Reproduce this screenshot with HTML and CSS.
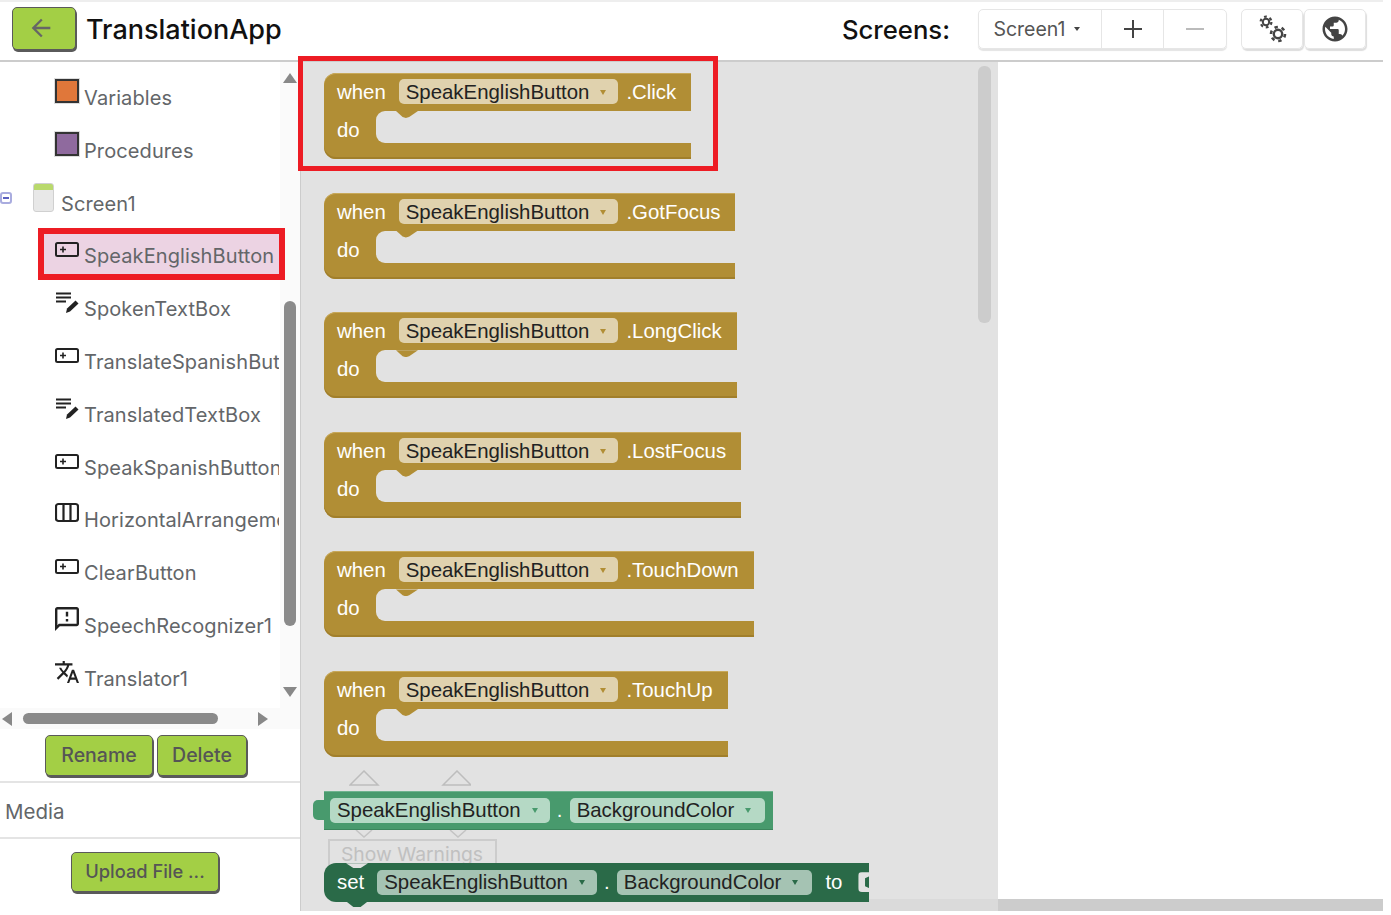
FILE: index.html
```html
<!DOCTYPE html>
<html lang="en">

<head>
    <meta charset="UTF-8">
    <title>TranslationApp</title>
    <link rel="stylesheet" href="styles.css">
</head>

<body>
    <div id="app">
        <header id="header">
            <button class="btn back-btn">
                <svg width="28" height="28" viewBox="0 0 24 24"><path d="M20 11H7.83l5.59-5.59L12 4l-8 8 8 8 1.41-1.41L7.83 13H20v-2z"/></svg>
            </button>
            <h1 class="app-title">TranslationApp</h1>
            <span class="screens-label">Screens:</span>
            <div class="tool-group">
                <div class="tool tool-screen">Screen1 <i class="caret"></i></div>
                <div class="tool tool-add">
                    <svg width="22" height="22" viewBox="0 0 22 22"><path d="M11 2v18M2 11h18" stroke="#444" stroke-width="2"/></svg>
                </div>
                <div class="tool tool-remove">
                    <svg width="22" height="22" viewBox="0 0 22 22"><path d="M2 11h18" stroke="#bbb" stroke-width="2"/></svg>
                </div>
            </div>
            <div class="tool-pair">
                <div class="tool tool-icon">
                    <svg width="30" height="30" viewBox="0 0 30 30" fill="none" stroke="#444">
                        <circle cx="9" cy="8" r="3.2" stroke-width="2"/>
                        <circle cx="9" cy="8" r="5.4" stroke-width="2.2" stroke-dasharray="2.8 2.9"/>
                        <circle cx="21" cy="20" r="4.2" stroke-width="2.4"/>
                        <circle cx="21" cy="20" r="7" stroke-width="2.6" stroke-dasharray="3.4 3.9"/>
                    </svg>
                </div>
                <div class="tool tool-icon">
                    <svg width="30" height="30" viewBox="0 0 24 24" fill="#444"><path d="M12 2C6.48 2 2 6.48 2 12s4.48 10 10 10 10-4.48 10-10S17.52 2 12 2zm-1 17.93c-3.95-.49-7-3.85-7-7.93 0-.62.08-1.21.21-1.79L9 15v1c0 1.1.9 2 2 2v1.93zm6.9-2.54c-.26-.81-1-1.39-1.9-1.39h-1v-3c0-.55-.45-1-1-1H8v-2h2c.55 0 1-.45 1-1V7h2c1.1 0 2-.9 2-2v-.41c2.93 1.19 5 4.06 5 7.41 0 2.08-.8 3.97-2.1 5.39z"/></svg>
                </div>
            </div>
        </header>

        <div id="main">
            <aside id="sidebar">
                <div class="tree-wrap">
                    <ul class="tree">
                        <li class="row">
                            <i class="swatch swatch-orange"></i>
                            <span class="label">Variables</span>
                        </li>
                        <li class="row">
                            <i class="swatch swatch-purple"></i>
                            <span class="label">Procedures</span>
                        </li>
                        <li class="row row-screen">
                            <i class="collapse"></i>
                            <i class="screen-icon"></i>
                            <span class="label">Screen1</span>
                        </li>
                        <li class="row selected">
                            <svg class="icon" viewBox="0 0 24 24"><use href="#i-button"/></svg>
                            <span class="label">SpeakEnglishButton</span>
                        </li>
                        <li class="row">
                            <svg class="icon" viewBox="0 0 24 24"><use href="#i-textbox"/></svg>
                            <span class="label">SpokenTextBox</span>
                        </li>
                        <li class="row">
                            <svg class="icon" viewBox="0 0 24 24"><use href="#i-button"/></svg>
                            <span class="label">TranslateSpanishButton</span>
                        </li>
                        <li class="row">
                            <svg class="icon" viewBox="0 0 24 24"><use href="#i-textbox"/></svg>
                            <span class="label">TranslatedTextBox</span>
                        </li>
                        <li class="row">
                            <svg class="icon" viewBox="0 0 24 24"><use href="#i-button"/></svg>
                            <span class="label">SpeakSpanishButton</span>
                        </li>
                        <li class="row">
                            <svg class="icon" viewBox="0 0 24 24"><use href="#i-horizontal"/></svg>
                            <span class="label">HorizontalArrangement1</span>
                        </li>
                        <li class="row">
                            <svg class="icon" viewBox="0 0 24 24"><use href="#i-button"/></svg>
                            <span class="label">ClearButton</span>
                        </li>
                        <li class="row">
                            <svg class="icon" viewBox="2 2 20 20"><path d="M20 2H4c-1.1 0-2 .9-2 2v18l4-4h14c1.1 0 2-.9 2-2V4c0-1.1-.9-2-2-2zm0 14H5.17L4 17.17V4h16v12zM11 12h2v2h-2zm0-6h2v4h-2z"/></svg>
                            <span class="label">SpeechRecognizer1</span>
                        </li>
                        <li class="row">
                            <svg class="icon" viewBox="1 2 22 20"><path d="M12.87 15.07l-2.54-2.51.03-.03c1.74-1.94 2.98-4.17 3.71-6.53H17V4h-7V2H8v2H1v1.99h11.17C11.5 7.92 10.44 9.75 9 11.35 8.07 10.32 7.3 9.19 6.69 8h-2c.73 1.63 1.73 3.17 2.98 4.56l-5.09 5.02L4 19l5-5 3.11 3.11.76-2.04zM18.5 10h-2L12 22h2l1.12-3h4.75L21 22h2l-4.5-12zm-2.62 7l1.62-4.33L19.12 17h-3.24z"/></svg>
                            <span class="label">Translator1</span>
                        </li>
                    </ul>
                    <div class="vscroll">
                        <i class="arrow-up"></i>
                        <div class="vscroll-thumb"></div>
                        <i class="arrow-down"></i>
                    </div>
                </div>
                <div class="hscroll">
                    <i class="arrow-left"></i>
                    <div class="hscroll-thumb"></div>
                    <i class="arrow-right"></i>
                </div>
                <div class="actions">
                    <button class="btn btn-rename">Rename</button>
                    <button class="btn btn-delete">Delete</button>
                </div>
                <div class="media-title">Media</div>
                <div class="upload">
                    <button class="btn btn-upload">Upload File ...</button>
                </div>
            </aside>

            <section id="workspace">
                <div class="canvas">
                    <div class="canvas-scroll"></div>

                    <div class="event">
                        <div class="event-head">when <span class="field">SpeakEnglishButton <i class="field-caret"></i></span> <span class="event-name">.Click</span></div>
                        <div class="event-do"><span class="do-label">do</span><div class="slot"><i class="notch"></i></div></div>
                        <div class="event-foot"></div>
                    </div>
                    <div class="event">
                        <div class="event-head">when <span class="field">SpeakEnglishButton <i class="field-caret"></i></span> <span class="event-name">.GotFocus</span></div>
                        <div class="event-do"><span class="do-label">do</span><div class="slot"><i class="notch"></i></div></div>
                        <div class="event-foot"></div>
                    </div>
                    <div class="event">
                        <div class="event-head">when <span class="field">SpeakEnglishButton <i class="field-caret"></i></span> <span class="event-name">.LongClick</span></div>
                        <div class="event-do"><span class="do-label">do</span><div class="slot"><i class="notch"></i></div></div>
                        <div class="event-foot"></div>
                    </div>
                    <div class="event">
                        <div class="event-head">when <span class="field">SpeakEnglishButton <i class="field-caret"></i></span> <span class="event-name">.LostFocus</span></div>
                        <div class="event-do"><span class="do-label">do</span><div class="slot"><i class="notch"></i></div></div>
                        <div class="event-foot"></div>
                    </div>
                    <div class="event">
                        <div class="event-head">when <span class="field">SpeakEnglishButton <i class="field-caret"></i></span> <span class="event-name">.TouchDown</span></div>
                        <div class="event-do"><span class="do-label">do</span><div class="slot"><i class="notch"></i></div></div>
                        <div class="event-foot"></div>
                    </div>
                    <div class="event">
                        <div class="event-head">when <span class="field">SpeakEnglishButton <i class="field-caret"></i></span> <span class="event-name">.TouchUp</span></div>
                        <div class="event-do"><span class="do-label">do</span><div class="slot"><i class="notch"></i></div></div>
                        <div class="event-foot"></div>
                    </div>

                    <div class="getter">
                        <svg class="mutator mutator-up" width="122" height="16" viewBox="0 0 122 16" fill="none" stroke="#bdbdbd" stroke-width="1.5"><path d="M1 15L15 1l14 14zM94 15l14-14 14 14z"/></svg>
                        <span class="field field-getter">SpeakEnglishButton <i class="field-caret"></i></span>
                        <span class="dot">.</span>
                        <span class="field field-getter">BackgroundColor <i class="field-caret"></i></span>
                        <svg class="mutator mutator-down" width="112" height="8" viewBox="0 0 112 8" fill="none" stroke="#c4c4c4" stroke-width="1.5"><path d="M1 0l8 7 8-7M95 0l8 7 8-7"/></svg>
                    </div>

                    <div class="show-warnings">Show Warnings</div>

                    <div class="setter">
                        <span>set</span>
                        <span class="field field-setter">SpeakEnglishButton <i class="field-caret"></i></span>
                        <span class="dot">.</span>
                        <span class="field field-setter">BackgroundColor <i class="field-caret"></i></span>
                        <span class="setter-to">to</span>
                        <i class="socket"></i>
                    </div>

                    <div class="red-box"></div>
                </div>
                <div class="blank"></div>
                <div class="bottom-scroll">
                    <div class="bottom-a"></div>
                    <div class="bottom-b"></div>
                    <div class="bottom-c"></div>
                </div>
            </section>
        </div>
    </div>

    <svg class="defs" width="0" height="0">
        <symbol id="i-button" viewBox="0 0 24 24">
            <rect x="1" y="6" width="22" height="13" rx="1.5" fill="none" stroke="#222" stroke-width="2"/>
            <path d="M5 12.5h6M8 9.5v6" stroke="#222" stroke-width="1.6"/>
        </symbol>
        <symbol id="i-textbox" viewBox="0 0 24 24">
            <path d="M1 3.5h15M1 7.5h15M1 11.5h10" stroke="#222" stroke-width="2"/>
            <path d="M11 23l1-4.500 8.500-8 3 3-8.500 8z" fill="#222"/>
        </symbol>
        <symbol id="i-horizontal" viewBox="0 0 24 24">
            <rect x="1" y="3" width="22" height="17" rx="2.5" fill="none" stroke="#222" stroke-width="2.2"/>
            <path d="M8.500 3v17M15.500 3v17" stroke="#222" stroke-width="2.2"/>
        </symbol>
    </svg>
</body>

</html>
```

FILE: styles.css
```css
*,
*::before,
*::after {
    padding: 0;
    margin: 0;
    box-sizing: border-box;
}

li {
    list-style: none;
}

i {
    display: block;
    font-style: normal;
}

body {
    background: #fff;
    height: 915px;
    overflow: hidden;
    font-family: Inter, "Liberation Sans", sans-serif;
}

#app {
    width: 1383px;
}

.defs {
    position: absolute;
}

.btn {
    background: #a3cf45;
    border: 1px solid #5a5a5a;
    border-radius: 5px;
    box-shadow: 1px 2px 0 #5a5a5a;
    color: #555;
    font-family: Inter, "Liberation Sans", sans-serif;
    font-size: 19.500px;
    font-weight: 500;
    padding-bottom: 2px;
}

/* header */
#header {
    height: 62px;
    display: flex;
    align-items: center;
    padding: 0 0 1px 12px;
    border-top: 2px solid #eee;
    border-bottom: 2px solid #ccc;
}

.back-btn {
    width: 64px;
    height: 43px;
    display: flex;
    align-items: center;
    justify-content: center;
    margin-bottom: 4px;
}

.back-btn svg {
    fill: #666;
    margin-right: 6px;
}

.app-title {
    margin-left: 10px;
    margin-bottom: 3px;
    font-size: 27px;
    font-weight: 500;
    color: #111;
}

.screens-label {
    margin-left: auto;
    margin-bottom: 3px;
    font-size: 25.700px;
    font-weight: 500;
    color: #111;
}

.tool-group,
.tool-pair {
    display: flex;
    height: 40px;
    margin-bottom: 4px;
}

.tool-group {
    margin-left: 28px;
    border: 1px solid #e6e6e6;
    border-radius: 5px;
    box-shadow: 0 2px 1px #e4e4e4;
}

.tool-pair {
    margin-left: 14px;
    margin-right: 16px;
}

.tool {
    display: flex;
    align-items: center;
    justify-content: center;
}

.tool-screen {
    width: 122px;
    gap: 8px;
    padding-right: 7px;
    font-size: 19.500px;
    color: #555;
}

.tool-add {
    width: 62px;
    border-left: 1px solid #e6e6e6;
}

.tool-remove {
    width: 63px;
    border-left: 1px solid #e6e6e6;
}

.tool-icon {
    width: 62px;
    margin-right: 1px;
    border: 1px solid #e6e6e6;
    border-radius: 5px;
    box-shadow: 1px 2px 1px #ddd;
}

.caret {
    width: 0;
    height: 0;
    border-left: 3.500px solid transparent;
    border-right: 3.500px solid transparent;
    border-top: 4px solid #444;
}

/* sidebar */
#main {
    display: flex;
    height: 849px;
}

#sidebar {
    width: 301px;
    flex-shrink: 0;
    border-right: 1px solid #ccc;
}

.tree-wrap {
    display: flex;
    height: 646px;
}

.tree {
    width: 280px;
    padding-top: 10px;
}

.row {
    height: 52.800px;
    display: flex;
    align-items: flex-start;
    padding-left: 55px;
    position: relative;
}

.label {
    width: 195px;
    margin-top: 14px;
    margin-left: 5px;
    overflow: hidden;
    white-space: nowrap;
    font-size: 20px;
    letter-spacing: .1px;
    line-height: 24px;
    color: #636669;
}

.icon {
    width: 24px;
    height: 24px;
    margin-top: 7px;
    flex-shrink: 0;
    fill: #222;
}

.swatch {
    width: 24px;
    height: 24px;
    margin-top: 7px;
    border: 2px solid #333;
    box-shadow: 0 0 0 1px #ddd;
}

.swatch-orange {
    background: #e0773a;
}

.swatch-purple {
    background: #8f6a9e;
}

.row-screen {
    padding-left: 33px;
}

.collapse {
    position: absolute;
    left: 0;
    top: 14px;
    width: 12px;
    height: 12px;
    border: 2px solid #a9acdf;
    border-radius: 3px;
    background: linear-gradient(#5b60c0, #5b60c0) center / 6px 2px no-repeat;
}

.screen-icon {
    width: 21px;
    height: 29px;
    margin-top: 5px;
    border: 1px solid #d0d0d0;
    border-radius: 3px;
    background: linear-gradient(#b9d96c 6px, #e8e8e8 6px);
}

.row-screen .label {
    margin-left: 7px;
    width: 200px;
}

.selected::before {
    content: "";
    position: absolute;
    left: 38px;
    top: -2px;
    width: 247px;
    height: 52px;
    border: 6px solid #ed1c24;
    background: #ecd3e3;
}

.selected .icon,
.selected .label {
    position: relative;
}

.vscroll {
    width: 20px;
    background: #fafafa;
    padding: 11px 0 0 3px;
}

.vscroll-thumb {
    width: 12px;
    height: 325px;
    margin: 218px 0 61px 1px;
    background: #8a8a8a;
    border-radius: 6px;
}

.arrow-up {
    width: 0;
    height: 0;
    border-left: 7px solid transparent;
    border-right: 7px solid transparent;
    border-bottom: 10px solid #888;
}

.arrow-down {
    width: 0;
    height: 0;
    border-left: 7px solid transparent;
    border-right: 7px solid transparent;
    border-top: 10px solid #888;
}

.hscroll {
    height: 21px;
    display: flex;
    align-items: center;
    padding-left: 2px;
    background: #fafafa;
}

.hscroll-thumb {
    width: 195px;
    height: 11px;
    margin: 0 40px 0 11px;
    background: #8a8a8a;
    border-radius: 6px;
}

.arrow-left {
    width: 0;
    height: 0;
    border-top: 7px solid transparent;
    border-bottom: 7px solid transparent;
    border-right: 10px solid #888;
}

.arrow-right {
    width: 0;
    height: 0;
    border-top: 7px solid transparent;
    border-bottom: 7px solid transparent;
    border-left: 10px solid #888;
}

.actions {
    display: flex;
    gap: 4px;
    padding: 6px 0 5px 45px;
    height: 54px;
    border-bottom: 2px solid #e4e4e4;
}

.btn-rename {
    width: 108px;
    height: 41px;
}

.btn-delete {
    width: 90px;
    height: 41px;
}

.media-title {
    height: 56px;
    padding: 1px 0 0 5px;
    line-height: 56px;
    font-size: 20.500px;
    color: #636669;
    border-bottom: 2px solid #e4e4e4;
}

.upload {
    padding: 13px 0 0 71px;
}

.btn-upload {
    width: 148px;
    height: 40px;
    font-size: 18.300px;
}

/* blocks workspace */
#workspace {
    flex: 1;
    display: flex;
    position: relative;
}

.canvas {
    width: 697px;
    display: flex;
    flex-direction: column;
    align-items: flex-start;
    gap: 33.600px;
    padding: 11px 0 0 23px;
    background: #e2e2e2;
    position: relative;
    font-family: "Liberation Sans", Arial, sans-serif;
    font-size: 20.400px;
}

.blank {
    flex: 1;
}

.canvas-scroll {
    position: absolute;
    left: 677px;
    top: 4px;
    width: 13px;
    height: 257px;
    background: #ccc;
    border-radius: 6px;
}

.bottom-scroll {
    position: absolute;
    left: 0;
    right: 0;
    bottom: 0;
    height: 12px;
    display: flex;
}

.bottom-a {
    width: 449px;
    background: #e2e2e2;
}

.bottom-b {
    width: 248px;
    background: #dadada;
}

.bottom-c {
    flex: 1;
    background: #ccc;
}

.event {
    display: flex;
    flex-direction: column;
    position: relative;
    z-index: 1;
    flex-shrink: 0;
    color: #fff;
}

.event-head {
    height: 38px;
    display: flex;
    align-items: flex-start;
    gap: 8px;
    padding: 6px 15px 0 13px;
    background: #b18e35;
    border-radius: 12px 0 0 0;
    box-shadow: inset 0 1px 0 #c8a95a;
    line-height: 27px;
    white-space: nowrap;
}

.event-head .field {
    margin-left: 5px;
    padding-top: 2px;
}

.field {
    height: 25px;
    display: flex;
    align-items: center;
    gap: 11px;
    padding: 0 12px 0 7px;
    background: #e0d2ae;
    border-radius: 5px;
    color: #222;
    line-height: 25px;
    white-space: nowrap;
}

.dot + .field {
    padding-right: 14px;
}

.field-caret {
    width: 0;
    height: 0;
    border-left: 3.500px solid transparent;
    border-right: 3.500px solid transparent;
    border-top: 5px solid #b18e35;
}

.event-do {
    height: 32px;
    display: flex;
    background: #b18e35;
}

.do-label {
    width: 52px;
    padding: 7px 0 0 13px;
    line-height: 25px;
}

.slot {
    flex: 1;
    background: #e2e2e2;
    border-radius: 9px 0 0 9px;
    position: relative;
}

.notch {
    position: absolute;
    left: 20px;
    top: 0;
    width: 22px;
    height: 7px;
    background: #b18e35;
    clip-path: polygon(0 0, 100% 0, 60% 85%, 45% 100%, 30% 85%);
}

.event-foot {
    height: 16px;
    background: #b18e35;
    border-radius: 0 0 0 12px;
    box-shadow: inset 0 -2px 0 #a17f2b;
}

.getter,
.setter {
    height: 39px;
    display: flex;
    align-items: center;
    position: relative;
    z-index: 1;
    flex-shrink: 0;
    white-space: nowrap;
}

.getter {
    padding: 0 8px 0 6px;
    background: #489a6d;
    box-shadow: inset 0 1px 0 #6fb38f, inset 0 -1px 0 #3b855c;
}

.getter::before {
    content: "";
    position: absolute;
    left: -11px;
    top: 9px;
    width: 12px;
    height: 20px;
    background: #489a6d;
    border-radius: 5px 0 0 5px;
}

.field-getter {
    background: #b5d9c5;
}

.field-getter .field-caret {
    border-top-color: #489a6d;
}

.dot {
    width: 20px;
    text-align: center;
}

.getter .dot {
    color: #fff;
}

.mutator {
    position: absolute;
}

.mutator-up {
    left: 25px;
    top: -21px;
}

.mutator-down {
    left: 31px;
    bottom: -8px;
}

.show-warnings {
    position: absolute;
    left: 27px;
    top: 777px;
    width: 169px;
    height: 27px;
    padding-left: 11px;
    border: 2px solid #ccc;
    border-bottom: 0;
    font-family: Inter, "Liberation Sans", sans-serif;
    font-size: 19.300px;
    line-height: 27px;
    color: #c0c0c0;
    overflow: hidden;
}

.setter {
    padding: 0 27px 0 13px;
    background: #2a6a48;
    border-radius: 12px 0 0 12px;
    color: #fff;
}

.setter::before {
    content: "";
    position: absolute;
    left: 22px;
    bottom: -5px;
    width: 22px;
    height: 6px;
    background: #2a6a48;
    clip-path: polygon(0 0, 100% 0, 65% 100%, 35% 100%);
}

.setter::after {
    content: "";
    position: absolute;
    left: 22px;
    top: 0;
    width: 22px;
    height: 5px;
    background: #e2e2e2;
    clip-path: polygon(0 0, 100% 0, 65% 100%, 35% 100%);
}

.setter > span:first-child {
    margin-right: 13px;
}

.field-setter {
    background: #a5c3b3;
}

.field-setter .field-caret {
    border-top-color: #2a6a48;
}

.setter-to {
    margin-left: 13px;
}

.socket {
    position: absolute;
    right: 0;
    top: 9px;
    width: 11px;
    height: 20px;
    background: #e2e2e2;
    border-radius: 4px 0 0 4px;
    clip-path: polygon(0 0, 100% 0, 100% 20%, 60% 30%, 60% 70%, 100% 80%, 100% 100%, 0 100%);
}

.red-box {
    position: absolute;
    left: -3px;
    top: -6px;
    width: 420px;
    height: 115px;
    border: 5px solid #ed1c24;
    z-index: 2;
}
```
